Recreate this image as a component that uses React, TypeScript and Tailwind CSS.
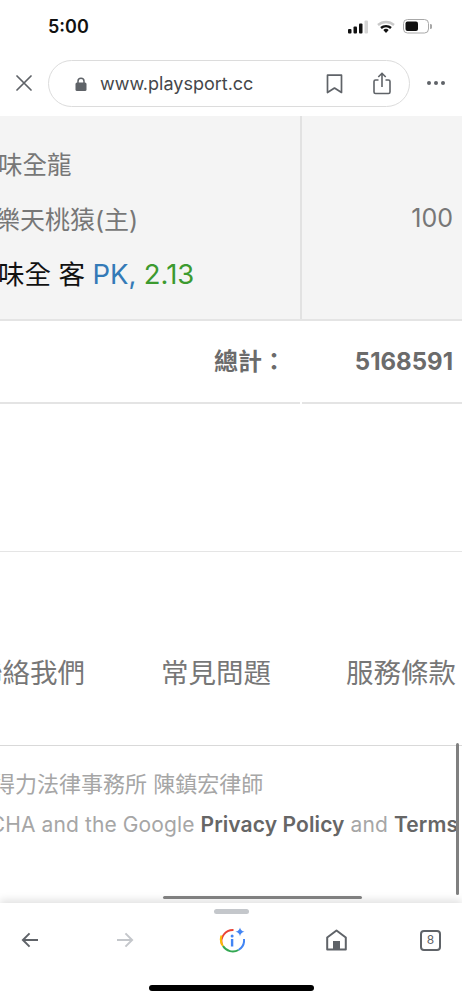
const cjk = { fontFamily: 'Inter, "Noto Sans CJK TC", sans-serif' };

function StatusBar() {
  return (
    <div className="h-[58px] flex items-start justify-between pt-[15px] pl-[48px] pr-[30px]">
      <span className="text-[18px] leading-[24px] font-semibold text-[#111]">5:00</span>
      <div className="flex items-center gap-[8px] pt-[4px]">
        <svg width="21" height="14" viewBox="0 0 21 14">
          <rect x="0" y="9" width="3.5" height="4.5" rx="1" fill="#111" />
          <rect x="5.5" y="6.5" width="3.5" height="7" rx="1" fill="#111" />
          <rect x="11" y="3.5" width="3.5" height="10" rx="1" fill="#111" />
          <rect x="16.5" y="0.5" width="3.5" height="13" rx="1" fill="#d4d4d4" />
        </svg>
        <svg width="18" height="14" viewBox="0 0 18 14">
          <path d="M1 5 A12 12 0 0 1 17 5" fill="none" stroke="#c9c9c9" strokeWidth="2.4" />
          <path d="M4 8 A7.5 7.5 0 0 1 14 8" fill="none" stroke="#111" strokeWidth="2.4" />
          <path d="M6.3 10 A4 4 0 0 1 11.7 10 L9 13 Z" fill="#111" />
        </svg>
        <svg width="29" height="15" viewBox="0 0 29 15">
          <rect x="0.5" y="0.5" width="25" height="13.5" rx="4" fill="none" stroke="#a8a8a8" />
          <rect x="2.5" y="2.5" width="12.5" height="9.5" rx="2" fill="#111" />
          <path d="M27 5 a2.5 2.5 0 0 1 0 5 z" fill="#a8a8a8" />
        </svg>
      </div>
    </div>
  );
}

function UrlBar() {
  return (
    <div className="h-[58px] flex items-start pl-[16px] pr-[18px] pt-[2px]">
      <svg width="16" height="16" viewBox="0 0 16 16" className="mt-[15px] shrink-0">
        <path d="M1 1 L15 15 M15 1 L1 15" stroke="#5f6368" strokeWidth="1.7" strokeLinecap="round" />
      </svg>
      <div className="ml-[16px] w-[362px] h-[47px] shrink-0 rounded-full border border-[#dcdcdc] flex items-center pl-[26px] pr-[18px]">
        <svg width="12" height="14" viewBox="0 0 12 14" className="shrink-0">
          <path d="M3 6.5 V4.2 a3 3 0 0 1 6 0 V6.5" fill="none" stroke="#5f6368" strokeWidth="1.5" />
          <rect x="0.5" y="5.5" width="11" height="8.5" rx="1.5" fill="#5f6368" />
        </svg>
        <span className="ml-[13px] text-[18px] text-[#45474a]" style={cjk}>www.playsport.cc</span>
        <svg width="17" height="20" viewBox="0 0 17 20" className="ml-auto shrink-0">
          <path d="M1.5 1.2 H15.5 V18.5 L8.5 14 L1.5 18.5 Z" fill="none" stroke="#5f6368" strokeWidth="1.7" strokeLinejoin="round" />
        </svg>
        <svg width="18" height="23" viewBox="0 0 18 23" className="ml-[30px] shrink-0">
          <path d="M5.5 8 H2.5 a1.5 1.5 0 0 0 -1.5 1.5 V20 a1.5 1.5 0 0 0 1.5 1.5 H15.5 a1.5 1.5 0 0 0 1.5 -1.5 V9.5 a1.5 1.5 0 0 0 -1.5 -1.5 H12.5" fill="none" stroke="#5f6368" strokeWidth="1.6" />
          <path d="M9 15 V1.5 M5.3 5 L9 1.3 L12.7 5" fill="none" stroke="#5f6368" strokeWidth="1.6" />
        </svg>
      </div>
      <div className="ml-[17px] mt-[21px] flex gap-[3px]">
        <span className="w-[4px] h-[4px] rounded-full bg-[#5f6368]" />
        <span className="w-[4px] h-[4px] rounded-full bg-[#5f6368]" />
        <span className="w-[4px] h-[4px] rounded-full bg-[#5f6368]" />
      </div>
    </div>
  );
}

function GameRow() {
  return (
    <div className="h-[205px] bg-[#f4f4f4] border-b-[2px] border-[#e4e4e4] flex">
      <div className="w-[300px] shrink-0 border-r-[2px] border-[#e2e2e2] flex flex-col pt-[22px] overflow-hidden box-content">
        <div className="ml-[-2px] text-[24.5px] leading-[54.5px] text-[#777] whitespace-nowrap">味全龍</div>
        <div className="ml-[-5px] text-[25px] leading-[54.5px] text-[#777] whitespace-nowrap">樂天桃猿(主)</div>
        <div className="ml-[-2px] text-[26.5px] leading-[54.5px] text-[#111] whitespace-nowrap">
          味全 客 <span className="text-[27.5px] text-[#337ab7]">PK,</span> <span className="text-[27.5px] text-[#3c9a2f]">2.13</span>
        </div>
      </div>
      <div className="flex-1 flex items-center justify-end pr-[9px] pt-[3px] text-[25px] text-[#777]">100</div>
    </div>
  );
}

function TotalRow() {
  return (
    <div className="flex">
      <div className="w-[300px] shrink-0 h-[83px] border-b-[2px] border-[#e4e4e4] flex items-center justify-end pr-[14px] text-[24px] font-bold text-[#6b6b6b]">
        總計：
      </div>
      <div className="flex-1 ml-[2px] h-[83px] border-b-[2px] border-[#e4e4e4] flex items-center justify-end pr-[9px] text-[24px] font-bold text-[#6b6b6b]">
        5168591
      </div>
    </div>
  );
}

function Footer() {
  return (
    <div className="overflow-hidden">
      <div className="h-[148px] border-b border-[#e5e5e5]" />
      <div className="h-[194px] border-b border-[#d9d9d9] flex items-center pt-[50px] text-[27.5px] text-[#777] whitespace-nowrap">
        <span className="ml-[-25px] w-[186px] shrink-0">聯絡我們</span>
        <span className="w-[185px] shrink-0">常見問題</span>
        <span className="shrink-0">服務條款</span>
      </div>
      <div className="pt-[18px] h-[157px] whitespace-nowrap">
        <div className="ml-[-29px] text-[22px] leading-[40px] text-[#a6a6a6]">取得力法律事務所 陳鎮宏律師</div>
        <div className="ml-[-24px] mt-[1px] text-[21px] leading-[40px] text-[#a6a6a6] tracking-[0.1px]">
          ACHA and the Google <b className="font-semibold text-[#666]">Privacy Policy</b> and <b className="font-semibold text-[#666]">Terms</b>
        </div>
      </div>
    </div>
  );
}

function BottomBar() {
  return (
    <div className="relative h-[97px] bg-white shadow-[0_-3px_8px_rgba(0,0,0,0.12)]">
      <div className="flex justify-center pt-[6px]">
        <div className="w-[35px] h-[5px] rounded-full bg-[#c4c7cb]" />
      </div>
      <div className="flex items-center pl-[21px] pt-[13px]">
        <svg width="18" height="16" viewBox="0 0 20 18" className="shrink-0">
          <path d="M19 9 H2 M9.5 1.5 L2 9 L9.5 16.5" fill="none" stroke="#5f6368" strokeWidth="2.2" />
        </svg>
        <svg width="18" height="16" viewBox="0 0 20 18" className="ml-[77px] shrink-0">
          <path d="M1 9 H18 M10.5 1.5 L18 9 L10.5 16.5" fill="none" stroke="#c4c7cb" strokeWidth="2.2" />
        </svg>
        <svg width="26" height="26" viewBox="0 0 26 26" className="ml-[85px] shrink-0">
          <path d="M3 18 A11.5 11.5 0 0 1 14.5 3" fill="none" stroke="#ea4335" strokeWidth="2" />
          <path d="M2.5 8.5 A11.5 11.5 0 0 0 4 19" fill="none" stroke="#fbbc04" strokeWidth="2" />
          <path d="M4 19 A11.5 11.5 0 0 0 19.5 23" fill="none" stroke="#34a853" strokeWidth="2" />
          <path d="M19.5 23 A11.5 11.5 0 0 0 25 12" fill="none" stroke="#4285f4" strokeWidth="2" />
          <rect x="11.9" y="12" width="2.4" height="7.5" fill="#4285f4" />
          <circle cx="13.1" cy="9" r="1.5" fill="#4285f4" />
          <path d="M21 0.5 Q21.6 4 25.5 4.8 Q21.6 5.6 21 9.2 Q20.4 5.6 16.5 4.8 Q20.4 4 21 0.5 Z" fill="#4285f4" />
        </svg>
        <svg width="21" height="22" viewBox="0 0 21 22" className="ml-[81px] shrink-0">
          <path d="M1.2 8.5 L10.5 1.5 L19.8 8.5 V20.5 H1.2 Z" fill="none" stroke="#5f6368" strokeWidth="2" strokeLinejoin="round" />
          <rect x="7" y="12" width="7" height="8.5" fill="#5f6368" />
        </svg>
        <div className="ml-[73px] w-[21px] h-[21px] shrink-0 rounded-[4px] border-2 border-[#5f6368] flex items-center justify-center text-[12px] leading-none text-[#5f6368]">8</div>
      </div>
      <div className="absolute left-[149px] top-[82px] w-[165px] h-[6px] rounded-full bg-black" />
    </div>
  );
}

export default function App() {
  return (
    <div className="relative w-[462px] h-[1000px] overflow-hidden bg-white" style={cjk}>
      <StatusBar />
      <UrlBar />
      <GameRow />
      <TotalRow />
      <Footer />
      <BottomBar />
      {/* scrollbars drawn over the page */}
      <div className="absolute left-[456px] top-[743px] w-[3px] h-[152px] rounded-full bg-[#808080]" />
      <div className="absolute left-[163px] top-[896px] w-[199px] h-[3px] rounded-full bg-[#808080]" />
    </div>
  );
}
